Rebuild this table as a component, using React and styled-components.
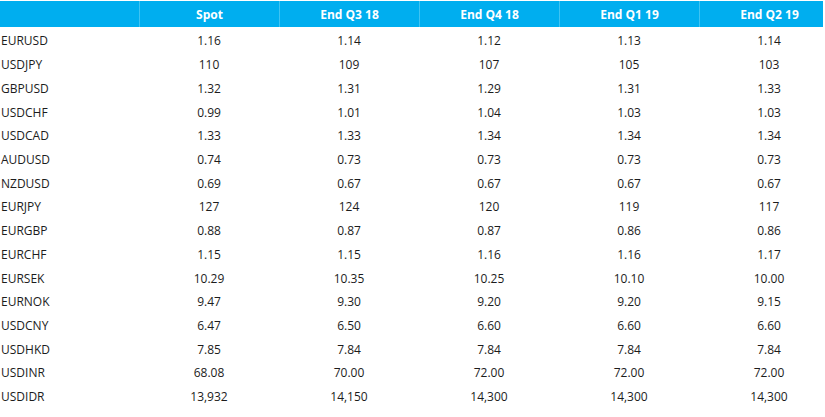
import React from "react";
import styled, { createGlobalStyle } from "styled-components";

const GlobalStyle = createGlobalStyle`
  body {
    margin: 0;
    background: #ffffff;
    font-family: "Open Sans", "Noto Sans", sans-serif;
  }
`;

const Page = styled.div`
  width: 823px;
  overflow: hidden;
  padding-top: 1px;
`;

const Table = styled.div`
  width: 839px;
  display: grid;
  grid-template-columns: 139px repeat(5, 140px);
`;

const HeadCell = styled.div`
  height: 26px;
  background: #00aeef;
  color: #ffffff;
  font-weight: 700;
  font-size: 12px;
  display: flex;
  align-items: center;
  justify-content: center;
  border-left: ${(p) => (p.$first ? "none" : "1px solid #3fc3f3")};
  box-sizing: border-box;
`;

const Spacer = styled.div`
  grid-column: 1 / -1;
  height: 2px;
`;

const Cell = styled.div`
  height: 23.73px;
  display: flex;
  align-items: center;
  justify-content: ${(p) => (p.$label ? "flex-start" : "center")};
  padding-left: ${(p) => (p.$label ? "1px" : "0")};
  font-size: 12px;
  color: #1c1c1c;
`;

const headers = ["Spot", "End Q3 18", "End Q4 18", "End Q1 19", "End Q2 19"];

const rows = [
  ["EURUSD", "1.16", "1.14", "1.12", "1.13", "1.14"],
  ["USDJPY", "110", "109", "107", "105", "103"],
  ["GBPUSD", "1.32", "1.31", "1.29", "1.31", "1.33"],
  ["USDCHF", "0.99", "1.01", "1.04", "1.03", "1.03"],
  ["USDCAD", "1.33", "1.33", "1.34", "1.34", "1.34"],
  ["AUDUSD", "0.74", "0.73", "0.73", "0.73", "0.73"],
  ["NZDUSD", "0.69", "0.67", "0.67", "0.67", "0.67"],
  ["EURJPY", "127", "124", "120", "119", "117"],
  ["EURGBP", "0.88", "0.87", "0.87", "0.86", "0.86"],
  ["EURCHF", "1.15", "1.15", "1.16", "1.16", "1.17"],
  ["EURSEK", "10.29", "10.35", "10.25", "10.10", "10.00"],
  ["EURNOK", "9.47", "9.30", "9.20", "9.20", "9.15"],
  ["USDCNY", "6.47", "6.50", "6.60", "6.60", "6.60"],
  ["USDHKD", "7.85", "7.84", "7.84", "7.84", "7.84"],
  ["USDINR", "68.08", "70.00", "72.00", "72.00", "72.00"],
  ["USDIDR", "13,932", "14,150", "14,300", "14,300", "14,300"],
];

const App = () => {
  return (
    <>
      <GlobalStyle />
      <Page>
        <Table>
          <HeadCell $first />
          {headers.map((h) => (
            <HeadCell key={h}>{h}</HeadCell>
          ))}
          <Spacer />
          {rows.map((row) =>
            row.map((v, i) => (
              <Cell key={row[0] + i} $label={i === 0}>
                {v}
              </Cell>
            ))
          )}
        </Table>
      </Page>
    </>
  );
};

export default App;
